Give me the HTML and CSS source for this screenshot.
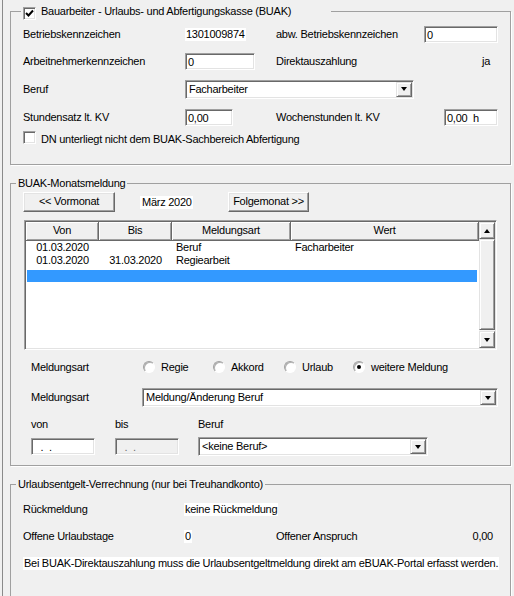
FILE: index.html
```html
<!DOCTYPE html>
<html>
<head>
<meta charset="utf-8">
<link rel="stylesheet" href="styles.css">
</head>
<body>
<div class="window">

<fieldset class="group g1">
  <legend class="lg lg1"><span class="check"><svg width="9" height="9" viewBox="0 0 9 9"><polyline points="1,4 3.5,6.5 8,1.5" fill="none" stroke="#000" stroke-width="2"/></svg></span><span class="lg1-text">Bauarbeiter - Urlaubs- und Abfertigungskasse (BUAK)</span></legend>
  <div class="g1grid">
    <span>Betriebskennzeichen</span>
    <span class="static">1301009874</span>
    <div class="pair"><span>abw. Betriebskennzeichen</span><div class="edit w74">0</div></div>

    <span>Arbeitnehmerkennzeichen</span>
    <div class="edit w70">0</div>
    <div class="pair"><span>Direktauszahlung</span><span class="val-ja">ja</span></div>

    <span>Beruf</span>
    <div class="combo w229 span23"><span class="combo-text">Facharbeiter</span><span class="combo-btn"><span class="tri"></span></span></div>

    <span>Stundensatz lt. KV</span>
    <div class="edit w48">0,00</div>
    <div class="pair"><span>Wochenstunden lt. KV</span><div class="edit w54">0,00  h</div></div>

    <div class="cbrow"><span class="check off"></span><span class="cbrow-text">DN unterliegt nicht dem BUAK-Sachbereich Abfertigung</span></div>
  </div>
</fieldset>

<fieldset class="group g2">
  <legend class="lg">BUAK-Monatsmeldung</legend>
  <div class="navrow">
    <div class="btn w92">&lt;&lt; Vormonat</div>
    <span class="month">März 2020</span>
    <div class="btn w81">Folgemonat &gt;&gt;</div>
  </div>

  <div class="list">
    <div class="list-main">
      <div class="lv-head">
        <div class="lv-hcell">Von</div>
        <div class="lv-hcell">Bis</div>
        <div class="lv-hcell">Meldungsart</div>
        <div class="lv-hcell">Wert</div>
      </div>
      <div class="lv-row">
        <span class="c">01.03.2020</span><span class="c"></span><span class="l">Beruf</span><span class="l">Facharbeiter</span>
      </div>
      <div class="lv-row">
        <span class="c">01.03.2020</span><span class="c">31.03.2020</span><span class="l">Regiearbeit</span><span class="l"></span>
      </div>
      <div class="lv-row sel"></div>
    </div>
    <div class="vscroll">
      <div class="sb-btn"><span class="tri up"></span></div>
      <div class="sb-thumb"></div>
      <div class="sb-btn"><span class="tri"></span></div>
    </div>
  </div>

  <div class="opt-row">
    <span>Meldungsart</span>
    <span class="opt"><span class="radio"></span>Regie</span>
    <span class="opt"><span class="radio"></span>Akkord</span>
    <span class="opt"><span class="radio"></span>Urlaub</span>
    <span class="opt"><span class="radio on"><span class="dot"></span></span>weitere Meldung</span>
  </div>

  <div class="sel-row">
    <span>Meldungsart</span>
    <div class="combo w356"><span class="combo-text">Meldung/Änderung Beruf</span><span class="combo-btn"><span class="tri"></span></span></div>
  </div>

  <div class="lbl-row">
    <span>von</span><span>bis</span><span>Beruf</span>
  </div>
  <div class="in-row">
    <div class="edit w64 mask">  .  .</div>
    <div class="edit w64 mask disabled">  .  .</div>
    <div class="combo w230"><span class="combo-text">&lt;keine Beruf&gt;</span><span class="combo-btn"><span class="tri"></span></span></div>
  </div>
</fieldset>

<fieldset class="group g3">
  <legend class="lg">Urlaubsentgelt-Verrechnung (nur bei Treuhandkonto)</legend>
  <div class="g3grid">
    <span>Rückmeldung</span>
    <span class="static span23">keine Rückmeldung</span>

    <span>Offene Urlaubstage</span>
    <span class="static">0</span>
    <div class="pair"><span>Offener Anspruch</span><span class="val-amt">0,00</span></div>

    <span class="static full note">Bei BUAK-Direktauszahlung muss die Urlaubsentgeltmeldung direkt am eBUAK-Portal erfasst werden.</span>
  </div>
</fieldset>

</div>
</body>
</html>
```

FILE: styles.css
```css
* { box-sizing: border-box; }

html, body {
  margin: 0;
  overflow: hidden;
  background: #f0f0f0;
}

body {
  font-family: "Liberation Sans", Arial, sans-serif;
  font-size: 11px;
  line-height: 13px;
  letter-spacing: -0.25px;
  color: #000;
}

.window {
  margin-left: 2px;
  border-left: 1px solid #8a8a8a;
  height: 596px;
  overflow: hidden;
  padding-top: 5px;
}

/* group boxes */
.group {
  margin: 0 0 0 7px;
  width: 501px;
  min-width: 0;
  border: 1px solid #a0a0a0;
  box-shadow: 1px 1px 0 #fff;
  padding: 0 12px;
}

.lg {
  padding: 0 2px;
  margin-left: -7px;
  line-height: 13px;
}

.lg1 {
  margin-left: -2px;
  width: 310px;
  display: flex;
  align-items: flex-start;
}

.lg1-text { margin-left: 5px; }

.g1 { padding-top: 3px; padding-bottom: 17px; }
.g2 { margin-top: 12px; padding-top: 2px; padding-bottom: 10px; }
.g3 { margin-top: 12px; padding-top: 5px; padding-bottom: 40px; }

/* grids */
.g1grid {
  display: grid;
  grid-template-columns: 162px 91px 1fr;
  grid-template-rows: 27px 27px 28px 28px 16px;
  align-items: center;
}

.g3grid {
  display: grid;
  grid-template-columns: 161px 92px 1fr;
  grid-template-rows: 27px 27px 27px;
  align-items: center;
}

.pair {
  display: flex;
  align-items: center;
  justify-content: space-between;
}

.span23 { grid-column: 2 / 4; }
.full { grid-column: 1 / 4; }

.static {
  justify-self: start;
  background: #fff;
  padding: 0 1px;
}

.note {
  white-space: nowrap;
  letter-spacing: -0.25px;
  word-spacing: -0.1px;
}

.val-ja { margin-right: 8px; }
.val-amt { margin-right: 5px; }

.cbrow {
  grid-column: 1 / 4;
  align-self: stretch;
  display: flex;
  align-items: flex-start;
}

.cbrow-text { margin-left: 5px; margin-top: 2px; }

/* checkbox */
.check {
  width: 13px;
  height: 13px;
  flex: none;
  background: #fff;
  border: 1px solid;
  border-color: #a0a0a0 #fff #fff #a0a0a0;
  box-shadow: inset 1px 1px 0 #696969, inset -1px -1px 0 #e3e3e3;
  display: flex;
  align-items: center;
  justify-content: center;
  margin-top: 2px;
  margin-bottom: -2px;
}

.check.off { margin-top: 0; margin-bottom: 0; }

/* edit fields */
.edit {
  height: 17px;
  background: #fff;
  border: 1px solid;
  border-color: #a0a0a0 #fff #fff #a0a0a0;
  box-shadow: inset 1px 1px 0 #696969, inset -1px -1px 0 #e3e3e3;
  padding: 1px 2px 0 2px;
  line-height: 14px;
  white-space: pre;
}

.edit.disabled { background: #f0f0f0; color: #6d6d6d; }

.w48 { width: 48px; }
.w54 { width: 54px; }
.w64 { width: 64px; }
.w70 { width: 70px; }
.w74 { width: 74px; }
.w81 { width: 81px; }
.w92 { width: 92px; }
.w229 { width: 229px; }
.w230 { width: 230px; }
.w356 { width: 356px; }

/* combo boxes */
.combo {
  height: 19px;
  display: flex;
  background: #fff;
  border: 1px solid;
  border-color: #a0a0a0 #fff #fff #a0a0a0;
  box-shadow: inset 1px 1px 0 #696969, inset -1px -1px 0 #e3e3e3;
  padding: 1px;
}

.combo-text {
  flex: 1;
  padding-left: 2px;
  line-height: 15px;
  white-space: nowrap;
}

.combo-btn {
  width: 16px;
  flex: none;
  background: #f0f0f0;
  border: 1px solid;
  border-color: #e3e3e3 #696969 #696969 #e3e3e3;
  box-shadow: inset 1px 1px 0 #fff, inset -1px -1px 0 #a0a0a0;
  display: flex;
  align-items: center;
  justify-content: center;
}

.tri {
  width: 0;
  height: 0;
  border-left: 3.5px solid transparent;
  border-right: 3.5px solid transparent;
  border-top: 4px solid #000;
}

.tri.up {
  border-top: 0;
  border-bottom: 4px solid #000;
}

/* buttons */
.navrow {
  display: flex;
  align-items: center;
  height: 20px;
}

.btn {
  height: 20px;
  background: #f0f0f0;
  border: 1px solid;
  border-color: #fff #696969 #696969 #fff;
  box-shadow: inset -1px -1px 0 #a0a0a0, inset 1px 1px 0 #e3e3e3;
  text-align: center;
  line-height: 17px;
}

.month {
  margin-left: 25px;
  width: 53px;
  padding-left: 2px;
  background: #fff;
  margin-right: 35px;
}

/* list view */
.list {
  margin-top: 8px;
  margin-left: 1px;
  width: 473px;
  height: 130px;
  background: #fff;
  border: 1px solid;
  border-color: #a0a0a0 #fff #fff #a0a0a0;
  box-shadow: inset 1px 1px 0 #696969, inset -1px -1px 0 #e3e3e3;
  padding: 1px;
  display: flex;
}

.list-main { flex: 1; display: flex; flex-direction: column; }

.lv-head,
.lv-row {
  display: grid;
  grid-template-columns: 73px 73px 119px 1fr;
}

.lv-head { height: 19px; }

.lv-hcell {
  background: #f0f0f0;
  border-right: 1px solid #696969;
  border-bottom: 1px solid #696969;
  box-shadow: inset 1px 1px 0 #fff, inset -1px -1px 0 #a0a0a0;
  text-align: center;
  line-height: 17px;
}

.lv-row { height: 13px; line-height: 13px; }
.lv-row .c { text-align: center; }
.lv-row .l { padding-left: 4px; }

.lv-row.sel {
  margin: 3px 2px 0 1px;
  height: 12px;
  background: #3399ff;
}

.vscroll {
  width: 16px;
  display: flex;
  flex-direction: column;
  background: #f4f4f4;
}

.sb-btn,
.sb-thumb {
  background: #f0f0f0;
  border: 1px solid;
  border-color: #e3e3e3 #696969 #696969 #e3e3e3;
  box-shadow: inset 1px 1px 0 #fff, inset -1px -1px 0 #a0a0a0;
}

.sb-btn {
  height: 17px;
  display: flex;
  align-items: center;
  justify-content: center;
}

.sb-thumb { flex: 1; margin-bottom: 1px; }

/* radio row */
.opt-row {
  margin-top: 8px;
  height: 18px;
  padding-left: 8px;
  display: grid;
  grid-template-columns: 112px 70px 71px 69px auto;
  align-items: center;
}

.opt { display: flex; align-items: center; }

.radio {
  width: 12px;
  height: 12px;
  flex: none;
  margin-right: 6px;
  border-radius: 50%;
  background: #fff;
  border: 1px solid;
  border-color: #a0a0a0 #fff #fff #a0a0a0;
  box-shadow: inset 1px 1px 0 #b0b0b0;
  display: flex;
  align-items: center;
  justify-content: center;
}

.dot {
  width: 4px;
  height: 4px;
  border-radius: 50%;
  background: #000;
}

/* select row */
.sel-row {
  margin-top: 12px;
  padding-left: 8px;
  display: grid;
  grid-template-columns: 111px auto;
  align-items: center;
}

.lbl-row {
  margin-top: 11px;
  height: 12px;
  line-height: 12px;
  padding-left: 8px;
  display: grid;
  grid-template-columns: 84px 83px auto;
}

.in-row {
  margin-top: 7px;
  padding-left: 8px;
  display: grid;
  grid-template-columns: 84px 83px auto;
  align-items: center;
  height: 18px;
}

.mask { padding-left: 3px; }
```
